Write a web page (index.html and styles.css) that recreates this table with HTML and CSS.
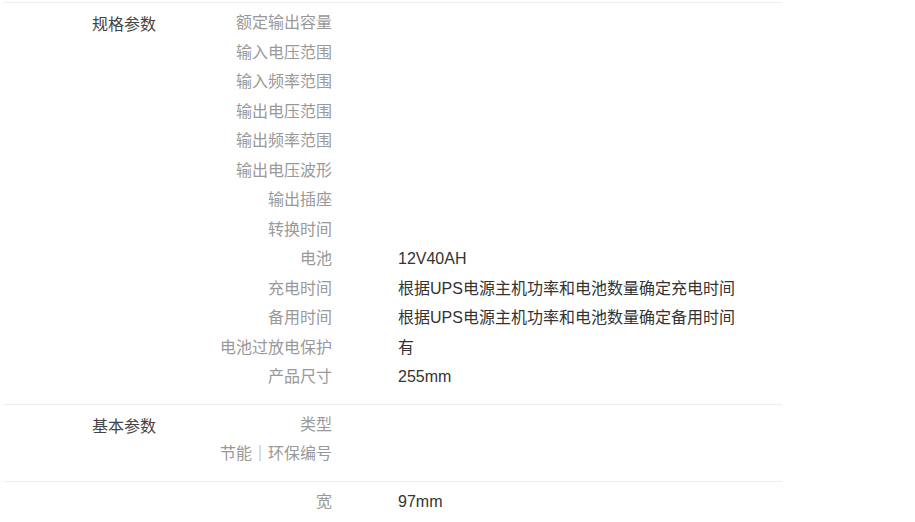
FILE: index.html
```html
<!DOCTYPE html>
<html lang="zh-CN">
<head>
    <meta charset="UTF-8">
    <title>规格参数</title>
    <link rel="stylesheet" href="styles.css">
</head>
<body>
    <div class="specs">
        <div class="group">
            <div class="group-name">规格参数</div>
            <div class="rows">
                <div class="row"><div class="key">额定输出容量</div><div class="val"></div></div>
                <div class="row"><div class="key">输入电压范围</div><div class="val"></div></div>
                <div class="row"><div class="key">输入频率范围</div><div class="val"></div></div>
                <div class="row"><div class="key">输出电压范围</div><div class="val"></div></div>
                <div class="row"><div class="key">输出频率范围</div><div class="val"></div></div>
                <div class="row"><div class="key">输出电压波形</div><div class="val"></div></div>
                <div class="row"><div class="key">输出插座</div><div class="val"></div></div>
                <div class="row"><div class="key">转换时间</div><div class="val"></div></div>
                <div class="row"><div class="key">电池</div><div class="val">12V40AH</div></div>
                <div class="row"><div class="key">充电时间</div><div class="val">根据UPS电源主机功率和电池数量确定充电时间</div></div>
                <div class="row"><div class="key">备用时间</div><div class="val">根据UPS电源主机功率和电池数量确定备用时间</div></div>
                <div class="row"><div class="key">电池过放电保护</div><div class="val">有</div></div>
                <div class="row"><div class="key">产品尺寸</div><div class="val">255mm</div></div>
            </div>
        </div>
        <div class="group">
            <div class="group-name">基本参数</div>
            <div class="rows">
                <div class="row"><div class="key">类型</div><div class="val"></div></div>
                <div class="row"><div class="key">节能｜环保编号</div><div class="val"></div></div>
            </div>
        </div>
        <div class="group">
            <div class="group-name"></div>
            <div class="rows">
                <div class="row"><div class="key">宽</div><div class="val">97mm</div></div>
            </div>
        </div>
    </div>
</body>
</html>
```

FILE: styles.css
```css
body {
    margin: 0;
    font-family: "Liberation Sans", "Noto Sans CJK SC", sans-serif;
    font-size: 16px;
    background: #fff;
}

.specs {
    width: 779px;
    margin: 2px 0 0 3px;
}

.group {
    display: flex;
    border-top: 1px solid #eee;
    padding: 5px 0 12px;
}

.group-name {
    width: 64px;
    padding-left: 89px;
    padding-top: 2px;
    color: #444;
    line-height: 29.5px;
}

.row {
    display: flex;
    line-height: 29.5px;
}

.key {
    width: 176px;
    text-align: right;
    color: #999;
}

.val {
    padding-left: 66px;
    color: #333;
}
```
